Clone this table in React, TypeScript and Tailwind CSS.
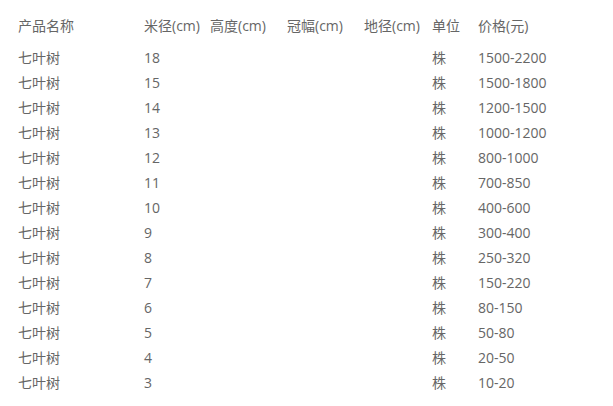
import React from "react";

const rows: [string, string][] = [
  ["18", "1500-2200"],
  ["15", "1500-1800"],
  ["14", "1200-1500"],
  ["13", "1000-1200"],
  ["12", "800-1000"],
  ["11", "700-850"],
  ["10", "400-600"],
  ["9", "300-400"],
  ["8", "250-320"],
  ["7", "150-220"],
  ["6", "80-150"],
  ["5", "50-80"],
  ["4", "20-50"],
  ["3", "10-20"],
];

function Row({ cells }: { cells: string[] }) {
  return (
    <div className="flex h-[25px] items-center whitespace-nowrap">
      <div className="w-[126px]">{cells[0]}</div>
      <div className="w-[66px]">{cells[1]}</div>
      <div className="w-[77px]">{cells[2]}</div>
      <div className="w-[77px]">{cells[3]}</div>
      <div className="w-[68px]">{cells[4]}</div>
      <div className="w-[46px]">{cells[5]}</div>
      <div>{cells[6]}</div>
    </div>
  );
}

export default function App() {
  return (
    <div
      className="w-[613px] h-[406px] bg-white pl-[18px] pt-[13px] text-[14px] text-[#666666] overflow-hidden"
      style={{ fontFamily: '"Open Sans", "Noto Sans CJK SC", sans-serif' }}
    >
      <Row cells={["产品名称", "米径(cm)", "高度(cm)", "冠幅(cm)", "地径(cm)", "单位", "价格(元)"]} />
      <div className="mt-[7px]">
        {rows.map(([d, p], i) => (
          <Row key={i} cells={["七叶树", d, "", "", "", "株", p]} />
        ))}
      </div>
    </div>
  );
}
